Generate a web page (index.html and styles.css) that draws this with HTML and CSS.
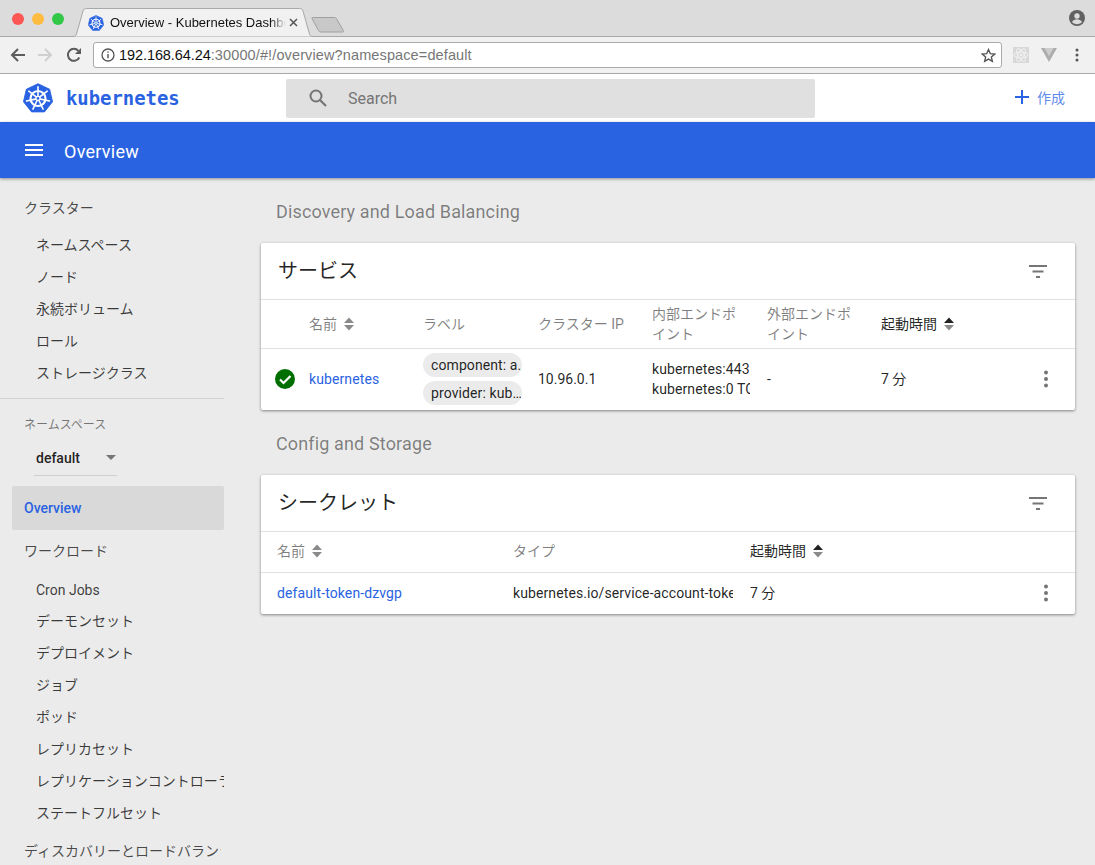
FILE: index.html
```html
<!DOCTYPE html>
<html lang="ja">
<head>
    <meta charset="UTF-8">
    <title>Overview - Kubernetes Dashboard</title>
    <link rel="stylesheet" href="styles.css">
</head>
<body>
    <svg class="defs" width="0" height="0">
        <symbol id="k8s" viewBox="0 0 32 32">
            <path d="M16 .8 28.400 6.700 31.500 20 22.900 30.800H9.100L.5 20 3.600 6.700Z" fill="currentColor" stroke="currentColor" stroke-width="1" stroke-linejoin="round"/>
            <g fill="none" stroke="#fff">
                <circle cx="16" cy="16.500" r="8" stroke-width="2.300"/>
                <circle cx="16" cy="16.500" r="2.200" stroke-width="1.500"/>
                <path stroke-width="1.700" stroke-linecap="round" d="M16 4v9.500M25.800 8.700l-7.500 5.900M28.200 19.300l-9.300-2.100M21.400 27.800l-4.100-8.600M10.600 27.800l4.100-8.600M3.800 19.300l9.300-2.100M6.200 8.700l7.500 5.900"/>
            </g>
        </symbol>
        <symbol id="sort" viewBox="0 0 12 16">
            <path class="up" d="M6 1.500 11 7H1Z"/>
            <path class="down" d="M1 9h10l-5 5.500Z"/>
        </symbol>
        <symbol id="filter" viewBox="0 0 24 24">
            <path d="M3 6h18v2H3zM6.500 11.500h11v2h-11zM10 17h4v2h-4z"/>
        </symbol>
        <symbol id="more" viewBox="0 0 24 24">
            <circle cx="12" cy="5.500" r="2"/><circle cx="12" cy="12" r="2"/><circle cx="12" cy="18.500" r="2"/>
        </symbol>
    </svg>

    <div class="browser">
        <div class="tabstrip">
            <div class="lights">
                <span class="light red"></span>
                <span class="light yellow"></span>
                <span class="light green"></span>
            </div>
            <div class="tab">
                <svg class="tab-bg" width="245" height="29" viewBox="0 0 245 29">
                    <path d="M0 28.500h2c2 0 3-1 3.500-2.500L12 3c.5-1.500 1.500-2.500 3.500-2.500h213c2 0 3 1 3.500 2.500l6.500 23c.5 1.500 1.500 2.500 3.500 2.500h2" fill="#f1f1f1" stroke="#a8a8a8"/>
                </svg>
                <svg class="favicon" width="16" height="16"><use href="#k8s"/></svg>
                <span class="tab-title">Overview - Kubernetes Dashboard</span>
                <svg class="tab-close" width="9" height="9" viewBox="0 0 9 9"><path d="M1 1l7 7M8 1 1 8" stroke="#555" stroke-width="1.500"/></svg>
            </div>
            <svg class="newtab" width="34" height="17" viewBox="0 0 34 17"><path d="M1.500 1.500h22c1 0 1.500.5 2 1.200l7 12.300c.3.600 0 1-.8 1h-22c-1 0-1.500-.4-2-1.200L1 2.500c-.3-.6 0-1 .5-1Z" fill="#c8c8c8" stroke="#a0a0a0"/></svg>
            <svg class="profile" width="16" height="16" viewBox="0 0 16 16">
                <circle cx="8" cy="8" r="8" fill="#616161"/>
                <circle cx="8" cy="6" r="2.700" fill="#dcdcdc"/>
                <path d="M3 12c1-2 3-2.800 5-2.800s4 .8 5 2.800c-1.200 1.400-3 2.200-5 2.200S4.200 13.400 3 12Z" fill="#dcdcdc"/>
            </svg>
        </div>
        <div class="addressbar">
            <svg width="16" height="16" viewBox="0 0 16 16" class="nav-icon"><path d="M15 8H2.500M8 2 2 8l6 6" fill="none" stroke="#5c5c5c" stroke-width="2"/></svg>
            <svg width="16" height="16" viewBox="0 0 16 16" class="nav-icon fwd"><path d="M1 8h12.500M8 2l6 6-6 6" fill="none" stroke="#cfcfcf" stroke-width="2"/></svg>
            <svg width="16" height="16" viewBox="0 0 16 16" class="nav-icon"><path d="M13.300 10.500A6 6 0 1 1 12.400 3.800" fill="none" stroke="#5c5c5c" stroke-width="2"/><path d="M15 1v6H9Z" fill="#5c5c5c"/></svg>
            <div class="omnibox">
                <svg width="14" height="14" viewBox="0 0 14 14"><circle cx="7" cy="7" r="6" fill="none" stroke="#555" stroke-width="1.300"/><path d="M7 6v4.200M7 3.500v1.300" stroke="#555" stroke-width="1.400"/></svg>
                <span class="url"><b>192.168.64.24</b>:30000/#!/overview?namespace=default</span>
                <svg class="star" width="15" height="15" viewBox="0 0 24 24"><path d="M12 2.500l2.900 6.600 7.100.7-5.400 4.700 1.600 7-6.200-3.700-6.200 3.700 1.600-7L2 9.800l7.100-.7Z" fill="none" stroke="#555" stroke-width="2.200"/></svg>
            </div>
            <div class="ext ext-react">
                <svg width="16" height="16" viewBox="0 0 16 16"><g fill="none" stroke="#f2f2f2"><ellipse cx="8" cy="8" rx="7" ry="3"/><ellipse cx="8" cy="8" rx="7" ry="3" transform="rotate(60 8 8)"/><ellipse cx="8" cy="8" rx="7" ry="3" transform="rotate(120 8 8)"/></g><circle cx="8" cy="8" r="1.300" fill="#f2f2f2"/></svg>
            </div>
            <svg class="ext-vue" width="16" height="14" viewBox="0 0 16 14"><path d="M0 0h16L8 14Z" fill="#adadad"/><path d="M3.500 0h9L8 8Z" fill="#cdcdcd"/></svg>
            <svg class="ext-menu" width="4" height="14" viewBox="0 0 4 14"><circle cx="2" cy="2" r="1.500" fill="#555"/><circle cx="2" cy="7" r="1.500" fill="#555"/><circle cx="2" cy="12" r="1.500" fill="#555"/></svg>
        </div>
    </div>

    <header class="topbar">
        <div class="brand">
            <svg class="brand-logo" width="30" height="30"><use href="#k8s"/></svg>
            <span class="brand-name">kubernetes</span>
        </div>
        <div class="search">
            <svg width="24" height="24" viewBox="0 0 24 24"><circle cx="10" cy="10" r="5.500" fill="none" stroke="#757575" stroke-width="2"/><path d="M14 14l6 6" stroke="#757575" stroke-width="2.200"/></svg>
            <span>Search</span>
        </div>
        <div class="create">
            <svg width="14" height="14" viewBox="0 0 14 14"><path d="M7 0v14M0 7h14" stroke="#2a63e1" stroke-width="2"/></svg>
            <span>作成</span>
        </div>
    </header>

    <div class="titlebar">
        <svg width="20" height="14" viewBox="0 0 20 14"><path d="M1 1h18v2H1zM1 6h18v2H1zM1 11h18v2H1z" fill="#fff"/></svg>
        <span>Overview</span>
    </div>

    <div class="layout">
        <nav class="sidenav">
            <div class="nav-group">クラスター</div>
            <div class="nav-item">ネームスペース</div>
            <div class="nav-item">ノード</div>
            <div class="nav-item">永続ボリューム</div>
            <div class="nav-item">ロール</div>
            <div class="nav-item">ストレージクラス</div>
            <div class="nav-divider"></div>
            <div class="ns-label">ネームスペース</div>
            <div class="ns-select"><span>default</span><i class="ns-arrow"></i></div>
            <div class="nav-active">Overview</div>
            <div class="nav-group workload">ワークロード</div>
            <div class="nav-item first">Cron Jobs</div>
            <div class="nav-item">デーモンセット</div>
            <div class="nav-item">デプロイメント</div>
            <div class="nav-item">ジョブ</div>
            <div class="nav-item">ポッド</div>
            <div class="nav-item">レプリカセット</div>
            <div class="nav-item">レプリケーションコントローラー</div>
            <div class="nav-item">ステートフルセット</div>
            <div class="nav-group discovery">ディスカバリーとロードバランシング</div>
        </nav>

        <main class="content">
            <h2 class="section">Discovery and Load Balancing</h2>
            <section class="card">
                <div class="card-head">
                    <span>サービス</span>
                    <svg class="icon-btn" width="24" height="24"><use href="#filter"/></svg>
                </div>
                <div class="row services head">
                    <div></div>
                    <div class="cell">名前 <svg class="sort" width="12" height="16"><use href="#sort"/></svg></div>
                    <div class="cell">ラベル</div>
                    <div class="cell">クラスター IP</div>
                    <div class="cell">内部エンドポイント</div>
                    <div class="cell">外部エンドポイント</div>
                    <div class="cell active">起動時間 <svg class="sort sorted" width="12" height="16"><use href="#sort"/></svg></div>
                </div>
                <div class="row services body">
                    <div class="status">
                        <svg width="20" height="20" viewBox="0 0 20 20"><circle cx="10" cy="10" r="10" fill="#006f00"/><path d="M5 10.500l3.500 3.500L15.500 7" fill="none" stroke="#fff" stroke-width="2.200"/></svg>
                    </div>
                    <div class="cell"><a>kubernetes</a></div>
                    <div class="cell chips">
                        <span class="chip">component: a…</span>
                        <span class="chip">provider: kub…</span>
                    </div>
                    <div class="cell">10.96.0.1</div>
                    <div class="cell clip">
                        <div>kubernetes:443 TCP</div>
                        <div>kubernetes:0 TCP</div>
                    </div>
                    <div class="cell">-</div>
                    <div class="cell age">7 分</div>
                    <svg class="row-menu" width="24" height="24"><use href="#more"/></svg>
                </div>
            </section>

            <h2 class="section">Config and Storage</h2>
            <section class="card">
                <div class="card-head">
                    <span>シークレット</span>
                    <svg class="icon-btn" width="24" height="24"><use href="#filter"/></svg>
                </div>
                <div class="row secrets head">
                    <div class="cell">名前 <svg class="sort" width="12" height="16"><use href="#sort"/></svg></div>
                    <div class="cell">タイプ</div>
                    <div class="cell active">起動時間 <svg class="sort sorted" width="12" height="16"><use href="#sort"/></svg></div>
                </div>
                <div class="row secrets body">
                    <div class="cell"><a>default-token-dzvgp</a></div>
                    <div class="cell clip">kubernetes.io/service-account-token</div>
                    <div class="cell age">7 分</div>
                    <svg class="row-menu" width="24" height="24"><use href="#more"/></svg>
                </div>
            </section>
        </main>
    </div>
</body>
</html>
```

FILE: styles.css
```css
html, body {
    margin: 0;
    padding: 0;
    height: 865px;
    overflow: hidden;
}

body {
    background-color: #ebebeb;
    color: rgba(0, 0, 0, .87);
    font-family: Roboto, "Noto Sans CJK JP", sans-serif;
    font-size: 14px;
}

.defs {
    display: block;
    height: 0;
}

/* browser window */
.tabstrip {
    display: flex;
    position: relative;
    height: 36px;
    background-color: #dcdcdc;
    border-bottom: 1px solid #a8a8a8;
    box-sizing: content-box;
}

.lights {
    display: flex;
    gap: 8px;
    padding: 13px 0 0 12px;
    width: 60px;
}

.light {
    width: 12px;
    height: 12px;
    border-radius: 50%;
}

.red { background-color: #fc5753; }
.yellow { background-color: #fdbc40; }
.green { background-color: #33c748; }

.tab {
    display: flex;
    align-items: center;
    position: relative;
    width: 245px;
    height: 29px;
    margin: 8px 0 -1px -1px;
    font-family: "Liberation Sans", sans-serif;
    font-size: 13px;
    color: #111;
}

.tab-bg {
    position: absolute;
    top: 0;
    left: 0;
}

.favicon {
    position: relative;
    margin-left: 17px;
    color: #2a63e1;
}

.tab-title {
    position: relative;
    margin-left: 6px;
    width: 176px;
    white-space: nowrap;
    overflow: hidden;
    -webkit-mask-image: linear-gradient(to right, #000 160px, transparent 176px);
    mask-image: linear-gradient(to right, #000 160px, transparent 176px);
}

.tab-close {
    position: relative;
    margin-left: 3px;
}

.newtab {
    margin: 16px 0 0 -5px;
}

.profile {
    position: absolute;
    right: 10px;
    top: 10px;
}

.addressbar {
    display: flex;
    align-items: center;
    height: 36px;
    background-color: #f1f1f1;
    border-bottom: 1px solid #a8a8a8;
    padding-left: 10px;
}

.nav-icon {
    margin-right: 11px;
}

.nav-icon.fwd {
    margin-right: 13px;
}

.omnibox {
    display: flex;
    align-items: center;
    box-sizing: border-box;
    width: 909px;
    height: 26px;
    padding: 0 5px 0 7px;
    background-color: #fff;
    border: 1px solid #aaa;
    border-radius: 3px;
}

.url {
    margin-left: 4px;
    font-family: "Liberation Sans", sans-serif;
    font-size: 14.500px;
    letter-spacing: .12px;
    color: #777;
    flex: 1;
}

.url b {
    font-weight: normal;
    letter-spacing: -.08px;
    color: #111;
}

.ext {
    display: flex;
    align-items: center;
    justify-content: center;
}

.ext-react {
    width: 16px;
    height: 16px;
    margin-left: 11px;
    background-color: #d8d8d8;
}

.ext-vue {
    margin-left: 12px;
}

.ext-menu {
    margin-left: 18px;
}

/* dashboard header */
.topbar {
    display: flex;
    align-items: center;
    height: 48px;
    background-color: #fff;
}

.brand {
    display: flex;
    align-items: center;
    width: 286px;
    padding-left: 23px;
    box-sizing: border-box;
}

.brand-logo {
    color: #2a63e1;
}

.brand-name {
    margin-left: 13px;
    font-family: "DejaVu Sans Mono", monospace;
    font-weight: bold;
    font-size: 18.900px;
    color: #2a63e1;
}

.search {
    display: flex;
    align-items: center;
    box-sizing: border-box;
    width: 529px;
    height: 39px;
    padding-left: 20px;
    background-color: #e0e0e0;
    border-radius: 2px;
    font-size: 16px;
    color: #757575;
}

.search span {
    margin-left: 18px;
}

.create {
    display: flex;
    align-items: center;
    margin: 0 30px 3px auto;
    color: #5f8bea;
}

.create span {
    margin-left: 8px;
}

.titlebar {
    display: flex;
    align-items: center;
    position: relative;
    height: 56px;
    padding-left: 24px;
    background-color: #2a63e1;
    color: #fff;
    font-size: 18px;
    letter-spacing: .25px;
    box-shadow: 0 1px 3px rgba(0, 0, 0, .4);
}

.titlebar span {
    margin: 2px 0 0 20px;
}

.layout {
    display: flex;
}

/* side navigation */
.sidenav {
    flex: none;
    width: 224px;
    height: 687px;
    overflow: hidden;
    white-space: nowrap;
    padding-top: 14px;
    box-sizing: border-box;
}

.nav-group {
    height: 32px;
    line-height: 32px;
    padding-left: 24px;
    margin-bottom: 5px;
    color: rgba(0, 0, 0, .7);
}

.nav-item {
    height: 32px;
    line-height: 32px;
    padding-left: 36px;
    color: rgba(0, 0, 0, .75);
    overflow: hidden;
}

.nav-item.first {
    height: 31px;
}

.nav-divider {
    height: 1px;
    margin-top: 9px;
    background-color: #d2d2d2;
}

.ns-label {
    margin: 18px 0 0 24px;
    font-size: 12px;
    line-height: 16px;
    color: rgba(0, 0, 0, .5);
}

.ns-select {
    display: flex;
    align-items: center;
    justify-content: space-between;
    box-sizing: border-box;
    width: 83px;
    height: 34px;
    margin: 9px 0 0 34px;
    padding: 0 1px 2px 2px;
    border-bottom: 1px solid #cfcfcf;
    font-weight: 500;
}

.ns-arrow {
    width: 0;
    height: 0;
    border-left: 5.500px solid transparent;
    border-right: 5.500px solid transparent;
    border-top: 5.500px solid #757575;
}

.nav-active {
    height: 44px;
    line-height: 44px;
    margin: 10px 0 0 12px;
    padding-left: 12px;
    background-color: #d9d9d9;
    border-radius: 2px;
    color: #2a63e1;
    font-weight: 500;
}

.workload {
    margin-top: 5px;
    margin-bottom: 7px;
}

.discovery {
    box-sizing: border-box;
    width: 221px;
    margin-top: 6px;
    overflow: hidden;
}

/* main content */
.content {
    flex: 1;
    padding: 0 20px 0 37px;
}

.section {
    margin: 0;
    height: 65px;
    padding: 22px 0 0 15px;
    box-sizing: border-box;
    font-size: 18px;
    line-height: 24px;
    font-weight: 400;
    letter-spacing: .14px;
    color: rgba(0, 0, 0, .48);
}

.card {
    background-color: #fff;
    border-radius: 2px;
    box-shadow: 0 1px 3px rgba(0, 0, 0, .45);
}

.card-head {
    display: flex;
    align-items: center;
    justify-content: space-between;
    height: 56px;
    padding: 0 25px 0 17px;
    font-size: 20px;
    border-bottom: 1px solid #e0e0e0;
}

.card-head span {
    margin-bottom: 4px;
}

.icon-btn {
    fill: #757575;
}

.row {
    display: grid;
    align-items: center;
    position: relative;
}

.services {
    grid-template-columns: 48px 114px 115px 114px 115px 114px 1fr;
}

.secrets {
    grid-template-columns: 236px 237px 1fr;
    padding-left: 16px;
}

.services.head {
    height: 48px;
    border-bottom: 1px solid #e0e0e0;
}

.services.body {
    box-sizing: border-box;
    height: 61px;
    padding-bottom: 2px;
}

.secrets.head {
    height: 40px;
    border-bottom: 1px solid #e0e0e0;
}

.secrets.head .cell {
    margin-bottom: 2px;
}

.secrets.body {
    box-sizing: border-box;
    height: 41px;
    padding-bottom: 2px;
}

.head .cell {
    color: rgba(0, 0, 0, .5);
    line-height: 20px;
    padding-right: 20px;
}

.head .cell.active {
    color: rgba(0, 0, 0, .87);
}

.sort {
    vertical-align: -3px;
    margin-left: 3px;
    fill: #8a8a8a;
}

.up {
    fill: var(--sort-up, #8a8a8a);
}

.sorted {
    --sort-up: #222;
}

.cell {
    min-width: 0;
    box-sizing: border-box;
}

.age {
    margin-bottom: 2px;
}

.clip {
    overflow: hidden;
    white-space: nowrap;
    line-height: 20px;
    margin-right: 17px;
    letter-spacing: .1px;
}

.cell a {
    color: #2a63e1;
    letter-spacing: .1px;
}

.status {
    display: flex;
    padding-left: 14px;
}

.chips {
    display: flex;
    flex-direction: column;
    gap: 4px;
}

.chip {
    box-sizing: border-box;
    width: 99px;
    height: 24px;
    line-height: 24px;
    padding: 0 0 0 8px;
    background-color: #ebebeb;
    border-radius: 12px;
    overflow: hidden;
    white-space: nowrap;
    letter-spacing: .1px;
}

.row-menu {
    position: absolute;
    right: 17px;
    top: 50%;
    margin-top: -13px;
    fill: #757575;
}
```
